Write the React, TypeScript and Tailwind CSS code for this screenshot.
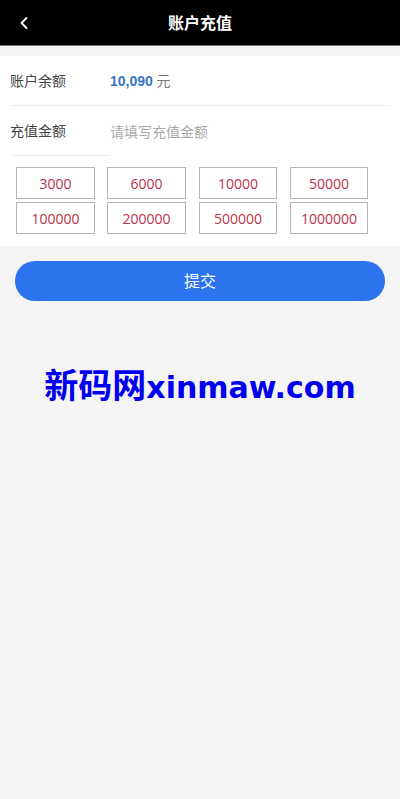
import { ChevronLeft } from "lucide-react";

const amounts = [
  { v: "3000", w: "w-[79px]" },
  { v: "6000", w: "w-[79px]" },
  { v: "10000", w: "w-[78px]" },
  { v: "50000", w: "w-[78px]" },
  { v: "100000", w: "w-[79px]" },
  { v: "200000", w: "w-[79px]" },
  { v: "500000", w: "w-[78px]" },
  { v: "1000000", w: "w-[78px]" },
];

export default function App() {
  return (
    <div className="min-h-[799px] bg-[#f4f4f5] font-['Open_Sans','Noto_Sans_CJK_SC',sans-serif]">
      <header className="relative flex h-[46px] items-center justify-center border-b border-[#777] bg-black">
        <ChevronLeft className="absolute left-[14px] top-[13px] h-5 w-5 text-white" strokeWidth={2.2} />
        <h1 className="text-base font-bold text-white">账户充值</h1>
      </header>
      <main className="mt-[10px] bg-white pb-3">
        <div className="px-[10px]">
          <div className="flex h-[50px] items-center border-b border-[#eeeeee]">
            <span className="w-[100px] text-[14px] text-[#444]">账户余额</span>
            <span className="text-[14px] text-[#777]">
              <b className="font-['Liberation_Sans'] text-[#3a74c9]">10,090</b> 元
            </span>
          </div>
          <div className="flex h-[50px] items-center">
            <span className="flex h-[50px] w-[100px] items-center border-b border-[#eeeeee] text-[14px] text-[#444]">充值金额</span>
            <span className="text-[14px] text-[#a9a9a9]">请填写充值金额</span>
          </div>
        </div>
        <div className="ml-4 mt-[11px] grid grid-cols-[91px_92px_91px_78px] gap-y-[3px]">
          {amounts.map((a) => (
            <div key={a.v} className={`flex h-8 items-center justify-center border border-[#b5b5b5] text-[14px] text-[#b8324a] ${a.w}`}>
              {a.v}
            </div>
          ))}
        </div>
      </main>
      <div className="px-[15px] pt-[15px]">
        <button className="h-10 w-full rounded-[20px] bg-[#2b74ee] text-base text-white">提交</button>
      </div>
      <div className="mt-[65px] whitespace-nowrap text-center font-['DejaVu_Sans','Noto_Sans_CJK_SC',sans-serif] font-bold leading-[40px] text-[#0000ee]">
        <span className="text-[34px]">新码网</span>
        <span className="text-[30px]">xinmaw.com</span>
      </div>
    </div>
  );
}
